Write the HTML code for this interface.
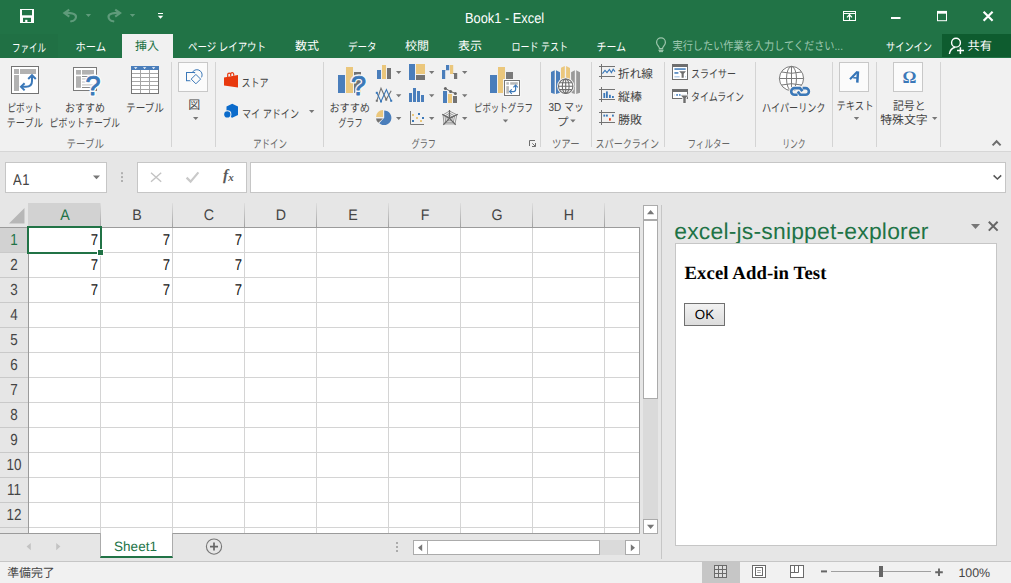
<!DOCTYPE html>
<html><head><meta charset="utf-8"><title>Book1 - Excel</title>
<style>
*{box-sizing:border-box}
html,body{margin:0;padding:0}
body{text-rendering:geometricPrecision;width:1011px;height:583px;position:relative;overflow:hidden;background:#e6e6e6;font-family:"Liberation Sans",sans-serif;color:#444}
.a{position:absolute}
.t{position:absolute;overflow:visible}
.t text{font-family:"Liberation Sans","Noto Sans CJK JP",sans-serif}
svg{display:block}
#title{left:0;top:0;width:1011px;height:58px;background:#217346}
#ribbon{left:0;top:58px;width:1011px;height:93px;background:#f1f1f1}
#ribline{left:0;top:151px;width:1011px;height:1px;background:#d6d6d6}
.sep{position:absolute;top:62px;height:85px;width:1px;background:#d4d4d4}
.lat{position:absolute;white-space:nowrap;line-height:1}
.box{position:absolute;background:#fff;border:1px solid #c6c6c6}
.hdr{position:absolute;top:203.9px;height:24px;font-size:15.3px;color:#444;text-align:center;line-height:23px;transform:scaleX(.93)}
.rh{position:absolute;left:0;width:28px;height:25px;font-size:16px;color:#444;text-align:center;line-height:25px;transform:scaleX(.84)}
.cell{position:absolute;font-size:15.6px;color:#111;text-align:right;line-height:25px;height:25px;transform:scaleX(.84);transform-origin:100% 50%}
</style></head>
<body>
<div id="title" class="a"></div>
<div class="a" style="left:0;top:34px;width:58px;height:24px;background:#207044"></div><div class="a" style="left:122px;top:34px;width:51px;height:24px;background:#f1f1f1"></div>
<div class="a" style="left:942px;top:34px;width:69px;height:23px;background:#0e5c2f"></div>
<div class="lat" style="left:465px;top:11.5px;font-size:14.5px;color:#fff;transform:scaleX(.885);transform-origin:0 50%">Book1 - Excel</div>
<svg class="t" style="left:11px;top:38px" width="37" height="18" role="img" aria-label="ファイル"><text x="1" y="13.5" font-size="11.5" fill="#fff" textLength="34" lengthAdjust="spacingAndGlyphs">ファイル</text></svg>
<svg class="t" style="left:74px;top:37px" width="34" height="18" role="img" aria-label="ホーム"><text x="1.5" y="13.5" font-size="11.5" fill="#fff" textLength="30.5" lengthAdjust="spacingAndGlyphs">ホーム</text></svg>
<svg class="t" style="left:134px;top:36px" width="27" height="19" role="img" aria-label="挿入"><text x="1" y="14" font-size="12" fill="#217346" textLength="24" lengthAdjust="spacingAndGlyphs">挿入</text></svg>
<svg class="t" style="left:187px;top:37px" width="81" height="18" role="img" aria-label="ページ レイアウト"><text x="1" y="13.5" font-size="11.5" fill="#fff" textLength="78" lengthAdjust="spacingAndGlyphs">ページ レイアウト</text></svg>
<svg class="t" style="left:294px;top:36px" width="27" height="19" role="img" aria-label="数式"><text x="1" y="14" font-size="12" fill="#fff" textLength="24" lengthAdjust="spacingAndGlyphs">数式</text></svg>
<svg class="t" style="left:347px;top:37px" width="32" height="18" role="img" aria-label="データ"><text x="1" y="13.5" font-size="11.5" fill="#fff" textLength="28.5" lengthAdjust="spacingAndGlyphs">データ</text></svg>
<svg class="t" style="left:404px;top:36px" width="27" height="19" role="img" aria-label="校閲"><text x="1" y="14" font-size="12" fill="#fff" textLength="24" lengthAdjust="spacingAndGlyphs">校閲</text></svg>
<svg class="t" style="left:457px;top:36px" width="27" height="19" role="img" aria-label="表示"><text x="1" y="14" font-size="12" fill="#fff" textLength="24" lengthAdjust="spacingAndGlyphs">表示</text></svg>
<svg class="t" style="left:510px;top:37px" width="60" height="18" role="img" aria-label="ロード テスト"><text x="1.5" y="13.5" font-size="11.5" fill="#fff" textLength="56.5" lengthAdjust="spacingAndGlyphs">ロード テスト</text></svg>
<svg class="t" style="left:595px;top:37px" width="33" height="18" role="img" aria-label="チーム"><text x="1.5" y="13.5" font-size="11.5" fill="#fff" textLength="29.5" lengthAdjust="spacingAndGlyphs">チーム</text></svg>
<svg class="t" style="left:671px;top:36px" width="174" height="19" role="img" aria-label="実行したい作業を入力してください..."><text x="1.5" y="14" font-size="12" fill="#9cc7af" textLength="170.5" lengthAdjust="spacingAndGlyphs">実行したい作業を入力してください...</text></svg>
<svg class="t" style="left:885px;top:37px" width="49" height="18" role="img" aria-label="サインイン"><text x="1" y="13.5" font-size="11.5" fill="#fff" textLength="46" lengthAdjust="spacingAndGlyphs">サインイン</text></svg>
<svg class="t" style="left:966px;top:36px" width="28" height="19" role="img" aria-label="共有"><text x="1.5" y="14" font-size="12" fill="#fff" textLength="24.5" lengthAdjust="spacingAndGlyphs">共有</text></svg>
<div id="ribbon" class="a"></div><div id="ribline" class="a"></div>
<div class="sep" style="left:171px"></div><div class="sep" style="left:215px"></div><div class="sep" style="left:323px"></div><div class="sep" style="left:540px"></div><div class="sep" style="left:591px"></div><div class="sep" style="left:664px"></div><div class="sep" style="left:755px"></div><div class="sep" style="left:832px"></div><div class="sep" style="left:876px"></div><div class="sep" style="left:940px"></div>
<svg class="t" style="left:6px;top:98px" width="38" height="18" role="img" aria-label="ピボット"><text x="1.5" y="13.5" font-size="11.5" fill="#444" textLength="34.5" lengthAdjust="spacingAndGlyphs">ピボット</text></svg>
<svg class="t" style="left:5px;top:113px" width="40" height="18" role="img" aria-label="テーブル"><text x="1.5" y="13.8" font-size="11.5" fill="#444" textLength="36.5" lengthAdjust="spacingAndGlyphs">テーブル</text></svg>
<svg class="t" style="left:64px;top:98px" width="43" height="18" role="img" aria-label="おすすめ"><text x="1" y="13.5" font-size="11.5" fill="#444" textLength="40" lengthAdjust="spacingAndGlyphs">おすすめ</text></svg>
<svg class="t" style="left:48px;top:113px" width="75" height="18" role="img" aria-label="ピボットテーブル"><text x="1.5" y="13.8" font-size="11.5" fill="#444" textLength="70.5" lengthAdjust="spacingAndGlyphs">ピボットテーブル</text></svg>
<svg class="t" style="left:125px;top:98px" width="41" height="18" role="img" aria-label="テーブル"><text x="1" y="13.8" font-size="11.5" fill="#444" textLength="38" lengthAdjust="spacingAndGlyphs">テーブル</text></svg>
<svg class="t" style="left:187px;top:95px" width="15" height="19" role="img" aria-label="図"><text x="1.2" y="14" font-size="12" fill="#444">図</text></svg>
<svg class="t" style="left:240px;top:73px" width="31" height="18" role="img" aria-label="ストア"><text x="1.5" y="13.5" font-size="11.5" fill="#444" textLength="27" lengthAdjust="spacingAndGlyphs">ストア</text></svg>
<svg class="t" style="left:241px;top:104px" width="61" height="18" role="img" aria-label="マイ アドイン"><text x="1" y="13.5" font-size="11.5" fill="#444" textLength="57" lengthAdjust="spacingAndGlyphs">マイ アドイン</text></svg>
<svg class="t" style="left:328px;top:98px" width="44" height="18" role="img" aria-label="おすすめ"><text x="1.5" y="13.5" font-size="11.5" fill="#444" textLength="40.5" lengthAdjust="spacingAndGlyphs">おすすめ</text></svg>
<svg class="t" style="left:337px;top:113px" width="28" height="17" role="img" aria-label="グラフ"><text x="1.2" y="13.5" font-size="11.5" fill="#444" textLength="24.5" lengthAdjust="spacingAndGlyphs">グラフ</text></svg>
<svg class="t" style="left:473px;top:98px" width="63" height="18" role="img" aria-label="ピボットグラフ"><text x="1" y="13.8" font-size="11.5" fill="#444" textLength="59" lengthAdjust="spacingAndGlyphs">ピボットグラフ</text></svg>
<svg class="t" style="left:547px;top:99px" width="39" height="17" role="img" aria-label="3D マッ"><text x="1.5" y="12.4" font-size="11.5" fill="#444" textLength="35.5" lengthAdjust="spacingAndGlyphs">3D マッ</text></svg>
<svg class="t" style="left:556px;top:112px" width="14" height="18" role="img" aria-label="プ"><text x="1" y="13.8" font-size="11.5" fill="#444">プ</text></svg>
<svg class="t" style="left:617px;top:64px" width="39" height="18" role="img" aria-label="折れ線"><text x="1" y="14" font-size="12" fill="#444" textLength="35" lengthAdjust="spacingAndGlyphs">折れ線</text></svg>
<svg class="t" style="left:617px;top:87px" width="27" height="18" role="img" aria-label="縦棒"><text x="1" y="14" font-size="12" fill="#444" textLength="24" lengthAdjust="spacingAndGlyphs">縦棒</text></svg>
<svg class="t" style="left:617px;top:110px" width="27" height="18" role="img" aria-label="勝敗"><text x="1" y="14" font-size="12" fill="#444" textLength="24" lengthAdjust="spacingAndGlyphs">勝敗</text></svg>
<svg class="t" style="left:690px;top:65px" width="48" height="17" role="img" aria-label="スライサー"><text x="1" y="13.2" font-size="11.5" fill="#444" textLength="45" lengthAdjust="spacingAndGlyphs">スライサー</text></svg>
<svg class="t" style="left:690px;top:88px" width="56" height="18" role="img" aria-label="タイムライン"><text x="1" y="13.3" font-size="11.5" fill="#444" textLength="53" lengthAdjust="spacingAndGlyphs">タイムライン</text></svg>
<svg class="t" style="left:761px;top:98px" width="67" height="18" role="img" aria-label="ハイパーリンク"><text x="1" y="13.6" font-size="11.5" fill="#444" textLength="63.5" lengthAdjust="spacingAndGlyphs">ハイパーリンク</text></svg>
<svg class="t" style="left:835px;top:96px" width="41" height="18" role="img" aria-label="テキスト"><text x="1.5" y="13.6" font-size="11.5" fill="#444" textLength="37" lengthAdjust="spacingAndGlyphs">テキスト</text></svg>
<svg class="t" style="left:892px;top:96px" width="35" height="18" role="img" aria-label="記号と"><text x="1" y="13.5" font-size="12" fill="#444" textLength="32.5" lengthAdjust="spacingAndGlyphs">記号と</text></svg>
<svg class="t" style="left:879px;top:110px" width="51" height="19" role="img" aria-label="特殊文字"><text x="1.2" y="14.4" font-size="12" fill="#444" textLength="47.5" lengthAdjust="spacingAndGlyphs">特殊文字</text></svg>
<svg class="t" style="left:65px;top:134px" width="41" height="18" role="img" aria-label="テーブル"><text x="1.5" y="13.9" font-size="11.5" fill="#666" textLength="37.5" lengthAdjust="spacingAndGlyphs">テーブル</text></svg>
<svg class="t" style="left:252px;top:134px" width="37" height="18" role="img" aria-label="アドイン"><text x="1" y="13.6" font-size="11.5" fill="#666" textLength="34" lengthAdjust="spacingAndGlyphs">アドイン</text></svg>
<svg class="t" style="left:410px;top:134px" width="28" height="18" role="img" aria-label="グラフ"><text x="1.5" y="13.9" font-size="11.5" fill="#666" textLength="24.5" lengthAdjust="spacingAndGlyphs">グラフ</text></svg>
<svg class="t" style="left:551px;top:134px" width="31" height="18" role="img" aria-label="ツアー"><text x="1" y="13.5" font-size="11.5" fill="#666" textLength="27.5" lengthAdjust="spacingAndGlyphs">ツアー</text></svg>
<svg class="t" style="left:594px;top:134px" width="67" height="18" role="img" aria-label="スパークライン"><text x="1.5" y="13.8" font-size="11.5" fill="#666" textLength="63.5" lengthAdjust="spacingAndGlyphs">スパークライン</text></svg>
<svg class="t" style="left:686px;top:134px" width="47" height="18" role="img" aria-label="フィルター"><text x="1.5" y="13.7" font-size="11.5" fill="#666" textLength="42.5" lengthAdjust="spacingAndGlyphs">フィルター</text></svg>
<svg class="t" style="left:781px;top:134px" width="27" height="18" role="img" aria-label="リンク"><text x="1.2" y="13.8" font-size="11.5" fill="#666" textLength="23.5" lengthAdjust="spacingAndGlyphs">リンク</text></svg>
<div class="box" style="left:5px;top:162px;width:102px;height:31px"></div><div class="lat" style="left:12.6px;top:173px;font-size:15.5px;color:#444;letter-spacing:.8px;transform:scaleX(.84);transform-origin:0 50%">A1</div><div class="box" style="left:137px;top:162px;width:110px;height:31px"></div><div class="box" style="left:250px;top:162px;width:756px;height:31px"></div>
<div class="a" style="left:28px;top:227px;width:612px;height:306px;background:#fff"></div><div class="a" style="left:28px;top:203px;width:73px;height:24px;background:#d2d2d2"></div><div class="a" style="left:0;top:227px;width:28px;height:26px;background:#d2d2d2"></div>
<div class="hdr" style="left:29.3px;width:72px;color:#217346">A</div><div class="hdr" style="left:101.3px;width:72px;color:#444">B</div><div class="hdr" style="left:173.3px;width:72px;color:#444">C</div><div class="hdr" style="left:245.3px;width:72px;color:#444">D</div><div class="hdr" style="left:317.3px;width:72px;color:#444">E</div><div class="hdr" style="left:389.3px;width:72px;color:#444">F</div><div class="hdr" style="left:461.3px;width:72px;color:#444">G</div><div class="hdr" style="left:533.3px;width:72px;color:#444">H</div>
<div class="rh" style="top:228.2px;color:#217346">1</div><div class="rh" style="top:253.2px;color:#444">2</div><div class="rh" style="top:278.2px;color:#444">3</div><div class="rh" style="top:303.2px;color:#444">4</div><div class="rh" style="top:328.2px;color:#444">5</div><div class="rh" style="top:353.2px;color:#444">6</div><div class="rh" style="top:378.2px;color:#444">7</div><div class="rh" style="top:403.2px;color:#444">8</div><div class="rh" style="top:428.2px;color:#444">9</div><div class="rh" style="top:453.2px;color:#444">10</div><div class="rh" style="top:478.2px;color:#444">11</div><div class="rh" style="top:503.2px;color:#444">12</div>
<div class="a" style="left:100px;top:228px;width:1px;height:305px;background:#d4d4d4"></div><div class="a" style="left:100px;top:203px;width:1px;height:24px;background:linear-gradient(#dedede,#a2a2a2)"></div><div class="a" style="left:172px;top:228px;width:1px;height:305px;background:#d4d4d4"></div><div class="a" style="left:172px;top:203px;width:1px;height:24px;background:linear-gradient(#dedede,#a2a2a2)"></div><div class="a" style="left:244px;top:228px;width:1px;height:305px;background:#d4d4d4"></div><div class="a" style="left:244px;top:203px;width:1px;height:24px;background:linear-gradient(#dedede,#a2a2a2)"></div><div class="a" style="left:316px;top:228px;width:1px;height:305px;background:#d4d4d4"></div><div class="a" style="left:316px;top:203px;width:1px;height:24px;background:linear-gradient(#dedede,#a2a2a2)"></div><div class="a" style="left:388px;top:228px;width:1px;height:305px;background:#d4d4d4"></div><div class="a" style="left:388px;top:203px;width:1px;height:24px;background:linear-gradient(#dedede,#a2a2a2)"></div><div class="a" style="left:460px;top:228px;width:1px;height:305px;background:#d4d4d4"></div><div class="a" style="left:460px;top:203px;width:1px;height:24px;background:linear-gradient(#dedede,#a2a2a2)"></div><div class="a" style="left:532px;top:228px;width:1px;height:305px;background:#d4d4d4"></div><div class="a" style="left:532px;top:203px;width:1px;height:24px;background:linear-gradient(#dedede,#a2a2a2)"></div><div class="a" style="left:604px;top:228px;width:1px;height:305px;background:#d4d4d4"></div><div class="a" style="left:604px;top:203px;width:1px;height:24px;background:linear-gradient(#dedede,#a2a2a2)"></div><div class="a" style="left:0;top:252px;width:28px;height:1px;background:#c9c9c9"></div><div class="a" style="left:29px;top:252px;width:610px;height:1px;background:#d4d4d4"></div><div class="a" style="left:0;top:277px;width:28px;height:1px;background:#c9c9c9"></div><div class="a" style="left:29px;top:277px;width:610px;height:1px;background:#d4d4d4"></div><div class="a" style="left:0;top:302px;width:28px;height:1px;background:#c9c9c9"></div><div class="a" style="left:29px;top:302px;width:610px;height:1px;background:#d4d4d4"></div><div class="a" style="left:0;top:327px;width:28px;height:1px;background:#c9c9c9"></div><div class="a" style="left:29px;top:327px;width:610px;height:1px;background:#d4d4d4"></div><div class="a" style="left:0;top:352px;width:28px;height:1px;background:#c9c9c9"></div><div class="a" style="left:29px;top:352px;width:610px;height:1px;background:#d4d4d4"></div><div class="a" style="left:0;top:377px;width:28px;height:1px;background:#c9c9c9"></div><div class="a" style="left:29px;top:377px;width:610px;height:1px;background:#d4d4d4"></div><div class="a" style="left:0;top:402px;width:28px;height:1px;background:#c9c9c9"></div><div class="a" style="left:29px;top:402px;width:610px;height:1px;background:#d4d4d4"></div><div class="a" style="left:0;top:427px;width:28px;height:1px;background:#c9c9c9"></div><div class="a" style="left:29px;top:427px;width:610px;height:1px;background:#d4d4d4"></div><div class="a" style="left:0;top:452px;width:28px;height:1px;background:#c9c9c9"></div><div class="a" style="left:29px;top:452px;width:610px;height:1px;background:#d4d4d4"></div><div class="a" style="left:0;top:477px;width:28px;height:1px;background:#c9c9c9"></div><div class="a" style="left:29px;top:477px;width:610px;height:1px;background:#d4d4d4"></div><div class="a" style="left:0;top:502px;width:28px;height:1px;background:#c9c9c9"></div><div class="a" style="left:29px;top:502px;width:610px;height:1px;background:#d4d4d4"></div><div class="a" style="left:0;top:527px;width:28px;height:1px;background:#c9c9c9"></div><div class="a" style="left:29px;top:527px;width:610px;height:1px;background:#d4d4d4"></div>
<div class="a" style="left:0;top:227px;width:640px;height:1px;background:#9b9b9b"></div><div class="a" style="left:28px;top:227px;width:1px;height:306px;background:#9b9b9b"></div><div class="a" style="left:639px;top:227px;width:1px;height:307px;background:#9b9b9b"></div><div class="a" style="left:0;top:533px;width:640px;height:1px;background:#9b9b9b"></div>
<div class="cell" style="left:28px;top:227.8px;width:70px">7</div><div class="cell" style="left:100px;top:227.8px;width:70px">7</div><div class="cell" style="left:172px;top:227.8px;width:70px">7</div><div class="cell" style="left:28px;top:252.8px;width:70px">7</div><div class="cell" style="left:100px;top:252.8px;width:70px">7</div><div class="cell" style="left:172px;top:252.8px;width:70px">7</div><div class="cell" style="left:28px;top:277.8px;width:70px">7</div><div class="cell" style="left:100px;top:277.8px;width:70px">7</div><div class="cell" style="left:172px;top:277.8px;width:70px">7</div>
<div class="a" style="left:27px;top:226px;width:75px;height:28px;border:2px solid #217346"></div><div class="a" style="left:97px;top:249px;width:7px;height:7px;background:#fff"></div><div class="a" style="left:98px;top:250px;width:5px;height:5px;background:#217346"></div>
<div class="a" style="left:643px;top:205px;width:15px;height:329px;background:#dadada"></div><div class="box" style="left:643px;top:205px;width:15px;height:15px;border-color:#ababab"></div><div class="box" style="left:643px;top:220px;width:15px;height:179px;border-color:#ababab"></div><div class="box" style="left:643px;top:519px;width:15px;height:15px;border-color:#ababab"></div><div class="a" style="left:413px;top:540px;width:227px;height:15px;background:#dadada"></div><div class="box" style="left:413px;top:540px;width:15px;height:15px;border-color:#ababab"></div><div class="box" style="left:427px;top:540px;width:173px;height:15px;border-color:#ababab"></div><div class="box" style="left:625px;top:540px;width:15px;height:15px;border-color:#ababab"></div>
<div class="a" style="left:661px;top:205px;width:1px;height:354px;background:#c6c6c6"></div>
<div class="a" style="left:100px;top:533px;width:73px;height:25px;background:#fff;border-left:1px solid #ababab;border-right:1px solid #ababab;border-bottom:2px solid #217346"></div><div class="lat" style="left:114px;top:539.6px;font-size:13.5px;color:#217346;letter-spacing:.05px">Sheet1</div>
<div class="lat" style="left:674.3px;top:219.8px;font-size:22.9px;color:#217346;letter-spacing:.2px" id="tp">excel-js-snippet-explorer</div><div class="box" style="left:675px;top:243px;width:322px;height:303px"></div><div class="lat" style="left:684.5px;top:264.6px;font-family:'Liberation Serif',serif;font-weight:bold;font-size:18.72px;color:#000;letter-spacing:.1px">Excel Add-in Test</div><div class="a" style="left:684px;top:303px;width:41px;height:23px;border:1px solid #707070;background:linear-gradient(#f2f2f2,#dcdcdc);font-size:13.33px;color:#000;text-align:center;line-height:21px">OK</div>
<div class="a" style="left:0;top:561px;width:1011px;height:22px;background:#f1f1f1;border-top:1px solid #c6c6c6"></div><div class="a" style="left:702px;top:562px;width:38px;height:21px;background:#c6c6c6"></div><svg class="t" style="left:6px;top:563px" width="51" height="18" role="img" aria-label="準備完了"><text x="1.2" y="14" font-size="12" fill="#444" textLength="47.5" lengthAdjust="spacingAndGlyphs">準備完了</text></svg>
<div class="lat" style="left:958.4px;top:566.6px;font-size:12.4px;color:#444">100%</div>
<svg class="a" style="left:0;top:0" width="1011" height="583" viewBox="0 0 1011 583" aria-hidden="true">
<!-- ===== title bar: quick access toolbar ===== -->
<g id="i-save">
<rect x="20" y="9" width="14" height="14" fill="#fff"/>
<rect x="22" y="10" width="10" height="5.3" fill="#217346"/>
<rect x="23" y="17.8" width="8" height="4.2" fill="#217346"/>
<rect x="25.2" y="19.8" width="2.2" height="2.2" fill="#fff"/>
</g>
<g id="i-undo" fill="none" stroke="#5f9b7b" stroke-width="2.15" stroke-linejoin="miter">
<path d="M69.3 9.6 L64.4 13 L69.3 16.6"/>
<path d="M65 13 C70 12.6 76.3 13.4 76 17 C75.7 19.6 73.6 21 71.2 21.3" stroke-linecap="round"/>
</g>
<path d="M85.7 14 h5.4 l-2.7 3z" fill="#5f9b7b"/>
<g id="i-redo" fill="none" stroke="#5f9b7b" stroke-width="2.15">
<path d="M115.2 9.6 L120.1 13 L115.2 16.6"/>
<path d="M119.5 13 C114.5 12.6 108.2 13.4 108.5 17 C108.8 19.6 110.9 21 113.3 21.3" stroke-linecap="round"/>
</g>
<path d="M129.8 14 h5.4 l-2.7 3z" fill="#5f9b7b"/>
<g id="i-qat" fill="#fff"><rect x="158" y="13" width="5" height="1"/><path d="M157.8 15.8 h5.4 l-2.7 2.9z"/></g>
<!-- ===== window controls ===== -->
<g id="i-ribbonopt" fill="none" stroke="#fff" stroke-width="1">
<rect x="843.5" y="11.5" width="12" height="9"/><path d="M843 13.5h13"/>
<path d="M849.5 14.2v6.3" stroke-width="1.1"/><path d="M847 17.4 l2.5 -2.6 l2.5 2.6" stroke-width="1.3"/>
</g>
<rect x="891" y="17" width="9.5" height="2" fill="#fff"/>
<g id="i-max" fill="none" stroke="#fff"><rect x="937.5" y="12" width="9" height="8.7"/><path d="M937 12.3h10" stroke-width="2.8"/></g>
<path d="M983.6 11.7 l9 9 M992.6 11.7 l-9 9" stroke="#fff" stroke-width="2.2" fill="none"/>
<!-- ===== tell me bulb ===== -->
<g id="i-bulb" fill="none" stroke="#9cc5ac" stroke-width="1.25">
<path d="M659.5 48.6 C659.3 46.2 656.6 45.2 656.6 42.4 A4.4 4.4 0 0 1 665.4 42.4 C665.4 45.2 662.7 46.2 662.5 48.6z"/>
<path d="M658.5 50.3h5" stroke-width="1.3"/><path d="M659 51.6h4" stroke-width="1.1"/>
</g>
<!-- ===== share person ===== -->
<g id="i-share" fill="none" stroke="#fff" stroke-width="1.4">
<circle cx="956" cy="42.7" r="4.4"/>
<path d="M949.4 54 C949.8 50.5 952 48 955.2 47.2"/>
<path d="M957 50.4h7 M960.4 47.2v6.8" stroke-width="1.5"/>
</g>
<!-- ===== ribbon: PivotTable ===== -->
<g id="i-pivot">
<rect x="11.5" y="66.5" width="27" height="27" fill="#fff" stroke="#737373"/>
<rect x="14" y="69" width="5" height="5" fill="#b2b2b2"/><rect x="20" y="69" width="16" height="5" fill="#b2b2b2"/><rect x="14" y="75" width="5" height="16" fill="#b2b2b2"/>
<g fill="none" stroke="#3b78b8" stroke-width="2">
<path d="M32 76.5 V81 Q32 86.8 26 86.8 H21.5"/>
<path d="M28.2 79 L32 75.2 L35.8 79"/>
<path d="M24.6 83.2 L21 86.8 L24.6 90.4"/>
</g></g>
<!-- ===== ribbon: Recommended PivotTables ===== -->
<g id="i-recpivot">
<rect x="73.5" y="67.5" width="23" height="23" fill="#fff" stroke="#7a7a7a"/>
<rect x="76" y="70" width="5" height="4.6" fill="#b2b2b2"/><rect x="82" y="70" width="12" height="4.6" fill="#b2b2b2"/><rect x="76" y="76.2" width="5" height="11.6" fill="#b2b2b2"/>
<rect x="82" y="76" width="7" height="1" fill="#8a8a8a"/><rect x="82" y="78.2" width="8" height="1.4" fill="#d0d0d0"/><rect x="82" y="81.3" width="4" height="1.4" fill="#d0d0d0"/><rect x="82" y="84.2" width="11" height="1.4" fill="#d0d0d0"/><rect x="82" y="87" width="9" height="1" fill="#8a8a8a"/>
<text x="85.6" y="95.3" font-family="Liberation Sans, sans-serif" font-size="27" fill="#fbfbfb" stroke="#fbfbfb" stroke-width="3.6" stroke-linejoin="round">?</text><text x="85.6" y="95.3" font-family="Liberation Sans, sans-serif" font-size="27" fill="#3b78b8" stroke="#3b78b8" stroke-width="0.9" stroke-linejoin="round">?</text>
</g>
<!-- ===== ribbon: Table ===== -->
<g id="i-table">
<rect x="131" y="66" width="28" height="28" fill="#fff"/>
<g stroke="#a6a6a6" fill="none"><path d="M140.5 70v24 M149.5 70v24 M131 73.5h28 M131 77.5h28 M131 81.5h28 M131 85.5h28 M131 89.5h28"/></g>
<rect x="131.5" y="66.5" width="27" height="27" fill="none" stroke="#767676"/>
<rect x="131" y="66" width="28" height="4" fill="#4a7ebb"/>
<path d="M134 67.2h3.4l-1.7 1.9z M142.9 67.2h3.4l-1.7 1.9z M151.9 67.2h3.4l-1.7 1.9z" fill="#fff"/>
</g>
<!-- ===== ribbon: Illustrations (図) ===== -->
<g id="i-illust">
<rect x="178.5" y="62.5" width="29" height="29" fill="#fbfbfb" stroke="#c8c8c8"/>
<g fill="none" stroke="#3b78b8" stroke-width="1">
<circle cx="196.9" cy="74.9" r="5.2"/>
<rect x="186.5" y="72.5" width="8.4" height="8.2" fill="#fbfbfb"/>
<path d="M195.9 74.2 L200.8 79.1 L195.9 84 L191 79.1z" fill="#fbfbfb" stroke="#fbfbfb" stroke-width="3.2"/>
<path d="M195.9 74.4 L200.6 79.1 L195.9 83.8 L191.2 79.1z" fill="#fbfbfb"/>
</g>
<path d="M193 116.9h5.4l-2.7 3z" fill="#777"/>
</g>
<!-- ===== ribbon: Store / My Add-ins ===== -->
<g id="i-store">
<path d="M227.7 77 V74.6 a1.5 1.5 0 0 1 3 0 V76.2 M230.7 76.2 V74.2 a1.5 1.5 0 0 1 3 0 V75.8" fill="none" stroke="#e8390e" stroke-width="1.2"/>
<path d="M224 77.4 L238 75 V87.5 L224 85.4z" fill="#e8390e"/>
</g>
<g id="i-myaddins">
<path d="M232.2 103.8 L238 106.6 V114.9 L232.2 117.8 L226.5 114.9 V106.6z" fill="#0b6bcb"/>
<circle cx="227.3" cy="114.4" r="4.1" fill="#f1f1f1"/><circle cx="227.3" cy="114.4" r="3.1" fill="#0b6bcb"/>
</g>
<path d="M309 109.9h5.4l-2.7 3z" fill="#777"/>
<!-- ===== ribbon: Recommended Charts ===== -->
<g id="i-reccharts">
<rect x="338" y="75" width="7" height="18" fill="#4a7ebb"/><rect x="346" y="67" width="7" height="26" fill="#ebc77c"/><rect x="354" y="72" width="7" height="21" fill="#737373"/>
<text x="350.9" y="95.4" font-family="Liberation Sans, sans-serif" font-size="27" fill="#f6f6f6" stroke="#f6f6f6" stroke-width="3.6" stroke-linejoin="round">?</text><text x="350.9" y="95.4" font-family="Liberation Sans, sans-serif" font-size="27" fill="#3b78b8" stroke="#3b78b8" stroke-width="0.9" stroke-linejoin="round">?</text>
</g>
<!-- ===== ribbon: PivotChart ===== -->
<g id="i-pivotchart">
<rect x="490" y="75" width="7" height="18" fill="#4a7ebb"/><rect x="498" y="67" width="7" height="26" fill="#ebc77c"/><rect x="506" y="72" width="7" height="10" fill="#7a7a7a"/>
<rect x="503" y="79" width="18" height="18" fill="#f5f5f5"/>
<rect x="504.5" y="80.5" width="15" height="15" fill="#fff" stroke="#767676"/>
<rect x="506.3" y="82.2" width="2.6" height="2.5" fill="#b9b9b9"/><rect x="510.2" y="82.2" width="7.6" height="2.5" fill="#b9b9b9"/><rect x="506.3" y="86.1" width="2.6" height="7.5" fill="#b9b9b9"/>
<g fill="none" stroke="#3b78b8" stroke-width="1.2"><path d="M515.6 85.6 V89.6 Q515.6 91.6 513.6 91.6 H510"/><path d="M513.4 87.4 L515.6 85.2 L517.8 87.4"/><path d="M511.8 89.4 L509.6 91.6 L511.8 93.8"/></g>
</g>
<path d="M502.8 119.5h5.4l-2.7 3z" fill="#777"/>
<!-- dialog launcher -->
<g fill="none" stroke="#6e6e6e"><path d="M535 140.5 H529.5 V146"/><path d="M532.3 143.3 L535.3 146.3"/><path d="M532 146.5 H535.5 V143" /></g>
<!-- ===== ribbon: 3D Map ===== -->
<g id="i-3dmap">
<path d="M551 72 L554.7 70.2 V94 L551 92.8z M556 70.2 L560 72.3 V92.8 L556 94z" fill="#4a7ebb"/>
<path d="M561 67.7 L564.8 66 V80 H561z M566.1 66 L570 68 V80 H566.1z" fill="#ebc77c"/>
<path d="M571.1 72.2 L574.8 70.2 V94 L571.1 92.8z M576.2 70.2 L580 72.3 V92.8 L576.2 94z" fill="#9a9a9a"/>
<circle cx="565.7" cy="86.2" r="8.6" fill="#f4f4f4"/>
<g fill="none" stroke="#6e6e6e" stroke-width="1.1"><circle cx="565.7" cy="86.2" r="7.2" fill="#fff"/><path d="M558.5 86.2h14.4 M559.6 82.8h12.2 M559.6 89.6h12.2 M565.7 79v14.4"/><ellipse cx="565.7" cy="86.2" rx="3.4" ry="7.2"/></g>
</g>
<path d="M570.2 119.5h5.4l-2.7 3z" fill="#777"/>
<!-- ===== small chart gallery icons ===== -->
<g id="i-col"><rect x="377" y="70" width="4" height="9" fill="#4a7ebb"/><rect x="382" y="65" width="4" height="14" fill="#ebc77c"/><rect x="387" y="68" width="4" height="11" fill="#737373"/></g>
<g id="i-tree"><rect x="409" y="64" width="6" height="16" fill="#4a7ebb"/><rect x="416" y="64" width="9" height="10" fill="#ebc77c"/><rect x="416" y="75" width="9" height="5" fill="#737373"/></g>
<g id="i-waterfall"><path d="M442 70h4v-5h3.2v5.2h-4v8.8h-3.2z" fill="#4a7ebb"/><path d="M450 65h3.2v9h-3.2z" fill="#ebc77c"/><path d="M453.2 73h4v6h-3.2v-5h-0.8z" fill="#737373"/></g>
<g id="i-line" fill="none" stroke-width="1.1">
<path d="M376.8 100.8 L381 88.2 L386.2 99.6 L391.2 90.8" stroke="#737373"/>
<path d="M376.8 92.8 L381 101.4 L386.4 89.6 L391.2 100.8" stroke="#3b78b8"/>
<g stroke="none"><rect x="375.8" y="99.8" width="2" height="2" fill="#737373"/><rect x="385.2" y="98.6" width="2" height="2" fill="#737373"/><rect x="375.8" y="91.8" width="2" height="2" fill="#3b78b8"/><rect x="380" y="100.4" width="2" height="2" fill="#3b78b8"/><rect x="390.2" y="99.8" width="2" height="2" fill="#3b78b8"/></g>
</g>
<g id="i-hist" fill="#4a7ebb"><rect x="409" y="93" width="3" height="9"/><rect x="413" y="88" width="3" height="14"/><rect x="417" y="91" width="3" height="11"/><rect x="421" y="95" width="3" height="7"/></g>
<g id="i-combo"><rect x="443" y="91" width="4" height="12" fill="#4a7ebb"/><rect x="448" y="94" width="4" height="9" fill="#ebc77c"/><rect x="453" y="96" width="4" height="7" fill="#737373"/>
<path d="M445.4 88.4 L450.6 91.5 L455.4 93.4" stroke="#666" stroke-width="1" fill="none"/><circle cx="445.4" cy="88.4" r="1.5" fill="#666"/><circle cx="450.6" cy="91.5" r="1.5" fill="#666"/><circle cx="455.4" cy="93.4" r="1.5" fill="#666"/></g>
<g id="i-pie">
<path d="M384.2 117.8 V110.5 A7.3 7.3 0 1 1 379.3 123.3z" fill="#4a7ebb"/>
<path d="M383 117 H376 A7 7 0 0 1 383 110z" fill="#ebc77c"/>
<path d="M383 118.4 L378.3 122.8 A7 7 0 0 1 376 118.4z" fill="#737373"/>
</g>
<g id="i-scatter"><path d="M410.5 111 V124.5 H424" fill="none" stroke="#777" stroke-width="1"/>
<rect x="412" y="114" width="2" height="2" fill="#ebc77c"/><rect x="418" y="113" width="2" height="2" fill="#3b78b8"/><rect x="416" y="117" width="2" height="2" fill="#ebc77c"/><rect x="422" y="117" width="2" height="2" fill="#3b78b8"/><rect x="412" y="120" width="2" height="2" fill="#3b78b8"/><rect x="420" y="120" width="2" height="2" fill="#ebc77c"/></g>
<g id="i-radar" fill="none" stroke="#8f8f8f" stroke-width="0.9">
<path d="M449.5 111.0 L456.8 114.8 L455.0 123.9 L444.0 123.9 L443.1 114.8z"/><path d="M449.5 113.2 L454.6 115.9 L453.3 122.3 L445.7 122.3 L445.0 115.9z"/><path d="M449.5 115.4 L452.5 116.9 L451.7 120.7 L447.3 120.7 L446.9 116.9z"/>
<path d="M449.5 118.4 L449.5 110 M449.5 118.4 L457.8 114.3 M449.5 118.4 L455.7 124.7 M449.5 118.4 L443.3 124.7 M449.5 118.4 L442.2 114.3" stroke="#666" stroke-width="1.25"/>
</g>
<g fill="#777">
<path d="M396 71h5.4l-2.7 3z"/><path d="M429 71h5.4l-2.7 3z"/><path d="M462 71h5.4l-2.7 3z"/>
<path d="M396 94.2h5.4l-2.7 3z"/><path d="M429 94.2h5.4l-2.7 3z"/><path d="M462 94.2h5.4l-2.7 3z"/>
<path d="M396 117h5.4l-2.7 3z"/><path d="M429 117h5.4l-2.7 3z"/><path d="M462 117h5.4l-2.7 3z"/>
</g>
<!-- ===== sparkline icons ===== -->
<g id="i-spark" fill="none" stroke="#737373" stroke-width="1">
<path d="M601.5 64v15 M599 66.5h16 M599 76.5h16"/>
<path d="M601.5 87v15 M599 89.5h16 M599 99.5h16"/>
<path d="M601.5 110v15 M599 112.5h16 M599 122.5h16"/>
<path d="M602.4 73.6 L605 70.4 L607 72.6 L609.4 69.4 L611.4 72.6 L613.2 69.2 L615 71.6" stroke="#3b78b8" stroke-width="1.1"/>
</g>
<g fill="#3b78b8"><rect x="603.4" y="93" width="1.8" height="5"/><rect x="606" y="91.4" width="1.8" height="6.6"/><rect x="609" y="94.8" width="1.8" height="3.2"/><rect x="612" y="96" width="1.8" height="2"/>
<rect x="603.4" y="114.6" width="1.8" height="2"/><rect x="606" y="114.6" width="1.8" height="2"/><rect x="612" y="114.6" width="1.8" height="2"/></g>
<rect x="609" y="118.2" width="1.8" height="2.4" fill="#e8390e"/>
<!-- ===== slicer / timeline ===== -->
<g id="i-slicer">
<rect x="672.5" y="64.5" width="15" height="15" fill="#fff" stroke="#6e6e6e"/><rect x="672" y="64" width="16" height="3" fill="#6e6e6e"/>
<rect x="674.4" y="68.3" width="11.3" height="1.5" fill="#3b78b8"/><rect x="674.4" y="72.2" width="4" height="1.5" fill="#3b78b8"/><rect x="674.4" y="76" width="5.2" height="1.5" fill="#b8cfe8"/><rect x="685" y="76" width="0.8" height="1.5" fill="#b8cfe8"/>
<path d="M679.1 71.2 H686 L683.7 73.8 V77.8 H681.6 V73.8z" fill="#6e6e6e"/>
</g>
<g id="i-timeline">
<rect x="672.5" y="89.5" width="15" height="9" fill="#fff" stroke="#6e6e6e"/><rect x="672" y="89" width="16" height="3" fill="#6e6e6e"/>
<rect x="674" y="94.4" width="0.8" height="1.2" fill="#b8cfe8"/><rect x="676.2" y="94.2" width="1.8" height="1.5" fill="#3b78b8"/><rect x="679" y="94.2" width="1.8" height="1.5" fill="#3b78b8"/><rect x="682.4" y="94.4" width="1" height="1.2" fill="#b8cfe8"/><rect x="684.6" y="94.4" width="1" height="1.2" fill="#b8cfe8"/>
<path d="M680 94.6 H689 L686.7 97.7 V103.9 H682.3 V97.7z" fill="#f4f4f4"/>
<path d="M681 95.6 H688 L685.7 98.1 V102.9 H683.3 V98.1z" fill="#6e6e6e"/>
</g>
<!-- ===== hyperlink ===== -->
<g id="i-link">
<g fill="none" stroke="#7a7a7a" stroke-width="1"><circle cx="791.5" cy="78.5" r="12.1" fill="#fff"/>
<path d="M779.4 78.5h24.2 M791.5 66.4v24.2"/><ellipse cx="791.5" cy="78.5" rx="5" ry="12.1"/>
<path d="M781.5 72 Q791.5 74.6 801.5 72 M781.5 85 Q791.5 82.4 801.5 85"/></g>
<g fill="none" stroke-linejoin="round"><path d="M802.4 91.3 L800 88.1 H794.5 A3.3 3.3 0 0 0 794.5 94.7 H797.6 M797.8 91.5 L800.2 94.7 H805.6 A3.3 3.3 0 0 0 805.6 88.1 H802.6" stroke="#f6f3f0" stroke-width="4.4" stroke-linecap="round"/>
<path d="M802.4 91.3 L800 88.1 H794.5 A3.3 3.3 0 0 0 794.5 94.7 H797.6 M797.8 91.5 L800.2 94.7 H805.6 A3.3 3.3 0 0 0 805.6 88.1 H802.6" stroke="#3b78b8" stroke-width="2.6"/></g>
</g>
<!-- ===== text / symbols ===== -->
<rect x="839.5" y="62.5" width="29" height="29" fill="#fbfbfb" stroke="#c8c8c8"/>
<g fill="none" stroke="#3474b7"><path d="M850 79.3 L857.3 71.7" stroke-width="2.1"/><path d="M858 71.4 L857.3 82.7" stroke-width="2.5"/><path d="M853.2 77.7 L858 78.1" stroke-width="1.5"/></g>
<path d="M853.8 116.9h5.4l-2.7 3z" fill="#777"/>
<rect x="893.5" y="62.5" width="29" height="29" fill="#fbfbfb" stroke="#c8c8c8"/>
<text x="902.6" y="82.8" font-family="Liberation Serif, serif" font-weight="700" font-size="17.4" fill="#3b78b8">Ω</text>
<path d="M932 116.9h5.4l-2.7 3z" fill="#777"/>
<path d="M992.6 145.4 L996.6 141.2 L1000.6 145.4" fill="none" stroke="#6e6e6e" stroke-width="2"/>
<!-- ===== formula bar ===== -->
<path d="M93 175.6h7l-3.5 3.6z" fill="#777"/>
<g fill="#b0b0b0"><rect x="121" y="172.2" width="2" height="2"/><rect x="121" y="176.1" width="2" height="2"/><rect x="121" y="180" width="2" height="2"/></g>
<path d="M151 172.8 L161.2 181.8 M161.2 172.8 L151 181.8" stroke="#c3c3c3" stroke-width="1.4" fill="none"/>
<path d="M186.6 177.6 L190.6 181.6 L198.4 172.4" stroke="#c9c9c9" stroke-width="2.2" fill="none"/>
<text x="223" y="180" font-family="Liberation Serif, serif" font-style="italic" font-weight="700" font-size="15.5" fill="#5a5a5a">f</text>
<text x="228.2" y="181.2" font-family="Liberation Serif, serif" font-style="italic" font-weight="700" font-size="11" fill="#5a5a5a">x</text>
<path d="M993.6 175.4 L997.4 179 L1001.2 175.4" fill="none" stroke="#555" stroke-width="1.5"/>
<!-- ===== grid corner ===== -->
<path d="M24.5 208 V223.5 H9z" fill="#b7b7b7"/>
<!-- ===== scrollbar arrows ===== -->
<g fill="#777"><path d="M647 214.2 h7.2 l-3.6 -4.2z"/><path d="M647 524.8 h7.2 l-3.6 4.2z"/><path d="M422.2 544.2 v7 l-4.2 -3.5z"/><path d="M630.8 544.2 v7 l4.2 -3.5z"/></g>
<g fill="#ababab"><rect x="396" y="542" width="2" height="2"/><rect x="396" y="546" width="2" height="2"/><rect x="396" y="550" width="2" height="2"/></g>
<!-- ===== sheet nav ===== -->
<g fill="#c3c3c3"><path d="M30.8 543 v7.2 l-4.2 -3.6z"/><path d="M56.2 543 v7.2 l4.2 -3.6z"/></g>
<g fill="none" stroke="#777" stroke-width="1.1"><circle cx="214" cy="546.6" r="7.6"/><path d="M210 546.6h8 M214 542.6v8" stroke-width="1.7" stroke="#666"/></g>
<!-- ===== task pane controls ===== -->
<path d="M971 224h9l-4.5 5z" fill="#777"/>
<path d="M988.8 221.8 l8.8 8.8 M997.6 221.8 l-8.8 8.8" stroke="#666" stroke-width="2" fill="none"/>
<!-- ===== status bar ===== -->
<g id="i-normal"><rect x="714" y="565" width="13" height="13" fill="#6a6a6a"/><g fill="#dedede"><rect x="715" y="566" width="3" height="3"/><rect x="719" y="566" width="3" height="3"/><rect x="723" y="566" width="3" height="3"/><rect x="715" y="570" width="3" height="3"/><rect x="719" y="570" width="3" height="3"/><rect x="723" y="570" width="3" height="3"/><rect x="715" y="574" width="3" height="3"/><rect x="719" y="574" width="3" height="3"/><rect x="723" y="574" width="3" height="3"/></g></g>
<g id="i-layout" fill="#fff" stroke="#6a6a6a"><rect x="752.5" y="565.5" width="13" height="12"/><rect x="755.5" y="567.5" width="7" height="8"/><path d="M757.2 570.5h3.6 M757.2 572.5h3.6" stroke-width="0.8" stroke="#8a8a8a"/></g>
<g id="i-break" fill="#fff" stroke="#6a6a6a"><rect x="790.5" y="565.5" width="13" height="12"/><path d="M794.5 566 V572.5 M790.5 572.5 H798.5 V566" fill="none"/></g>
<rect x="821" y="570.4" width="6" height="2" fill="#666"/>
<rect x="831" y="571" width="100" height="1" fill="#a0a0a0"/>
<rect x="879" y="566" width="4" height="11" fill="#666"/>
<path d="M935.2 572.2h7.6 M939 568.4v7.6" stroke="#666" stroke-width="1.9" fill="none"/>
</svg>

</body></html>
